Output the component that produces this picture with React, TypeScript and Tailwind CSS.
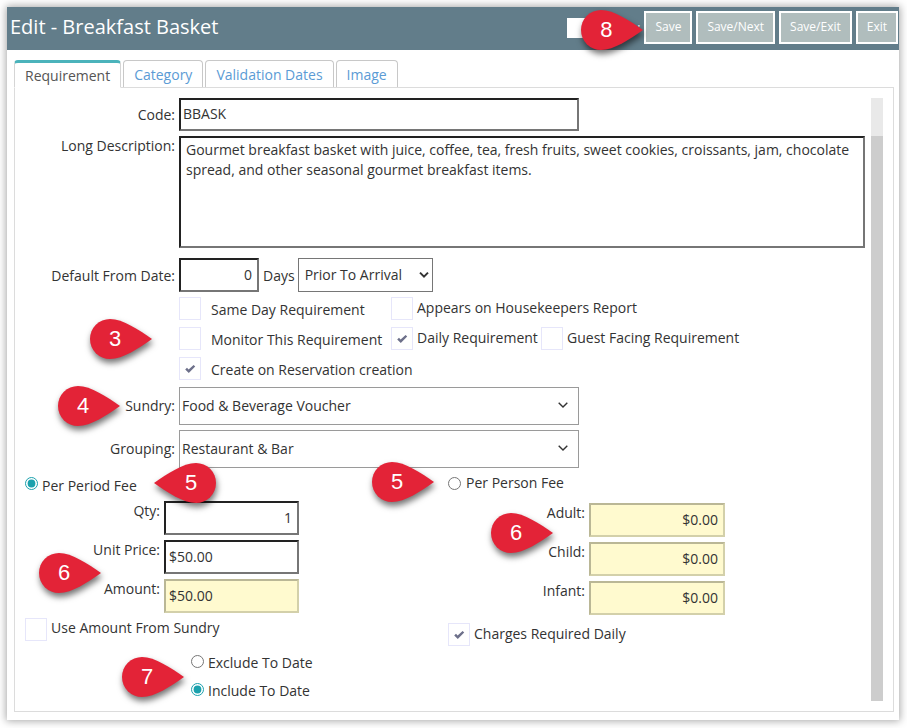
import React, { useState } from 'react';

interface PinProps {
    label: string;
    className: string;
    flip?: boolean;
}

// Red numbered marker, pointing right unless flipped
const Pin: React.FC<PinProps> = ({ label, className, flip }) => (
    <div className={`pointer-events-none absolute z-10 h-10 w-[62px] ${className}`}>
        <svg
            viewBox="0 0 62 40"
            className="h-10 w-[62px] overflow-visible drop-shadow-[1px_4px_3px_rgba(0,0,0,0.55)]"
            aria-hidden="true"
        >
            <path
                d={
                    flip
                        ? 'M0 20 C13 11 29 0 42 0 A20 20 0 0 1 42 40 C29 40 13 29 0 20 Z'
                        : 'M62 20 C49 11 33 0 20 0 A20 20 0 0 0 20 40 C33 40 49 29 62 20 Z'
                }
                fill="#e32337"
            />
        </svg>
        <span
            className={`absolute inset-y-0 flex w-[50px] items-center justify-center font-['Liberation_Sans',sans-serif] text-[22px] text-white ${flip ? 'right-0' : 'left-0'}`}
        >
            {label}
        </span>
    </div>
);

interface CheckProps {
    label: string;
    checked?: boolean;
    className?: string;
    textClassName?: string;
}

const Check: React.FC<CheckProps> = ({ label, checked, className = 'gap-1', textClassName = 'pt-px' }) => (
    <label className={`flex items-start ${className}`}>
        <span className="grid shrink-0 place-items-center">
            <input
                type="checkbox"
                defaultChecked={checked}
                className="peer col-start-1 row-start-1 h-[23px] w-[22px] appearance-none border border-[#e6e6fa] bg-white"
            />
            <svg
                viewBox="0 0 12 10"
                className="pointer-events-none invisible col-start-1 row-start-1 h-2.5 w-3 peer-checked:visible"
                aria-hidden="true"
            >
                <path d="M1.2 5.4 L3 3.8 L4.6 5.6 L9.6 1 L11.2 2.4 L4.8 9 Z" fill="#6d708a" />
            </svg>
        </span>
        <span className={textClassName}>{label}</span>
    </label>
);

interface FieldProps {
    id: string;
    label: string;
    value: string;
    readOnly?: boolean;
    right?: boolean;
    widthClassName?: string;
}

const FeeField: React.FC<FieldProps> = ({ id, label, value, readOnly, right, widthClassName = 'w-[135px]' }) => (
    <div className="flex items-start gap-1">
        <label htmlFor={id} className="w-[135px] text-right">{label}:</label>
        <input
            id={id}
            defaultValue={value}
            readOnly={readOnly}
            className={`h-[34px] border-2 pb-0.5 ${widthClassName} ${right ? 'pr-[5px] text-right' : 'pl-[3px]'} ${
                readOnly
                    ? 'border-t-[#bab796] border-r-[#d3d0aa] border-b-[#d3d0aa] border-l-[#bab796] bg-[#fffacf]'
                    : 'border-t-[#222] border-r-[#767676] border-b-[#767676] border-l-[#222]'
            }`}
        />
    </div>
);

const SundrySelect: React.FC<{ id: string; label: string; options: string[]; children?: React.ReactNode }> = ({
    id,
    label,
    options,
    children,
}) => (
    <div className="relative flex items-center gap-1">
        {children}
        <label htmlFor={id} className="w-[150px] text-right">{label}:</label>
        <div className="grid w-[400px] items-center">
            <select id={id} className="col-start-1 row-start-1 h-[38px] appearance-none border border-[#9a9a9a] bg-white pl-0.5">
                {options.map((option) => <option key={option}>{option}</option>)}
            </select>
            <svg
                viewBox="0 0 10 6"
                className="pointer-events-none col-start-1 row-start-1 mr-[11px] mb-0.5 h-1.5 w-2.5 justify-self-end"
                aria-hidden="true"
            >
                <path d="M0.7 0.7 L5 5 L9.3 0.7" fill="none" stroke="#333" strokeWidth="1.4" />
            </svg>
        </div>
    </div>
);

const tabs = ['Requirement', 'Category', 'Validation Dates', 'Image'];
const actions = ['Save', 'Save/Next', 'Save/Exit', 'Exit'];

const App: React.FC = () => {
    const [activeTab, setActiveTab] = useState('Requirement');

    return (
        <div className="bg-white pt-[7px] pr-2 pb-2 pl-[7px] font-['Open_Sans',sans-serif] text-sm leading-5 text-[#333]">
            <main className="bg-white pb-2 shadow-[0_0_8px_1px_rgba(0,0,0,0.35)]">
                <header className="flex h-[43px] items-center justify-between bg-[#627d8a] pr-px pl-[3px] text-white">
                    <h1 className="pb-1 text-xl">Edit - Breakfast Basket</h1>
                    <div className="flex items-center gap-1 pb-0.5">
                        <div className="relative flex w-[73px] items-center justify-between">
                            <input
                                id="inactive"
                                type="checkbox"
                                aria-label="Inactive"
                                className="h-5 w-5 appearance-none bg-white"
                            />
                            <label htmlFor="inactive" className="text-xs">:</label>
                            <Pin label="8" className="-top-2 -right-[3px]" />
                        </div>
                        {actions.map((action) => (
                            <button
                                key={action}
                                type="button"
                                className="h-[33px] border-2 border-white bg-[#b0bdbd] px-[9px] pb-0.5 text-xs"
                            >
                                {action}
                            </button>
                        ))}
                    </div>
                </header>

                <div className="mt-2.5 mr-[5px] ml-[7px]">
                    <div role="tablist" className="flex items-end gap-0.5">
                        {tabs.map((tab) => (
                            <button
                                key={tab}
                                type="button"
                                role="tab"
                                aria-selected={tab === activeTab}
                                onClick={() => setActiveTab(tab)}
                                className={
                                    tab === activeTab
                                        ? 'relative -mb-px h-7 rounded-t border border-t-[3px] border-[#d5d5d5] border-t-[#4bb3bb] border-b-white bg-white px-2.5 pt-0.5 text-[#555]'
                                        : 'h-[27px] rounded-t border border-b-0 border-[#c8c8c8] px-2.5 pt-px text-[#5b9bd5]'
                                }
                            >
                                {tab}
                            </button>
                        ))}
                    </div>

                    <div className="flex justify-between gap-1.5 border border-[#dcdcdc] p-2.5">
                        <form className="min-w-0 flex-1">
                            <div className="flex items-center gap-1">
                                <label htmlFor="code" className="w-[150px] text-right">Code:</label>
                                <input
                                    id="code"
                                    defaultValue="BBASK"
                                    className="h-[33px] w-[400px] border-2 border-t-[#222] border-r-[#767676] border-b-[#767676] border-l-[#222] pb-0.5 pl-0.5"
                                />
                            </div>

                            <div className="mt-[5px] flex items-start gap-1">
                                <label htmlFor="description" className="w-[150px] shrink-0 text-right">Long Description:</label>
                                <textarea
                                    id="description"
                                    className="h-28 min-w-0 flex-1 resize-none border-2 border-t-[#222] border-r-[#767676] border-b-[#767676] border-l-[#222] px-[5px] py-0.5"
                                    defaultValue="Gourmet breakfast basket with juice, coffee, tea, fresh fruits, sweet cookies, croissants, jam, chocolate spread, and other seasonal gourmet breakfast items."
                                />
                            </div>

                            <div className="mt-2.5 flex items-center gap-1">
                                <label htmlFor="days" className="w-[150px] pt-0.5 text-right">Default From Date:</label>
                                <input
                                    id="days"
                                    defaultValue="0"
                                    className="h-[34px] w-20 border-2 border-t-[#222] border-r-[#767676] border-b-[#767676] border-l-[#222] pr-[5px] pb-0.5 text-right"
                                />
                                <div className="flex items-center gap-[3px]">
                                    <label htmlFor="prior" className="pt-0.5">Days</label>
                                    <div className="grid w-[135px] items-center">
                                        <select
                                            id="prior"
                                            className="col-start-1 row-start-1 h-[34px] appearance-none border border-[#767676] bg-white pl-1.5"
                                        >
                                            <option>Prior To Arrival</option>
                                            <option>After Arrival</option>
                                        </select>
                                        <svg
                                            viewBox="0 0 10 8"
                                            className="pointer-events-none col-start-1 row-start-1 mr-1 h-2 w-2.5 justify-self-end"
                                            aria-hidden="true"
                                        >
                                            <path d="M1 1.6 L5 5.6 L9 1.6" fill="none" stroke="#333" strokeWidth="2" />
                                        </svg>
                                    </div>
                                </div>
                            </div>

                            <div className="relative mt-[5px] flex flex-col gap-[7px] pl-[154px]">
                                <Pin label="3" className="top-[22px] left-[65px]" />
                                <div className="flex">
                                    <Check label="Same Day Requirement" className="w-[212px] gap-2.5" textClassName="pt-[3px]" />
                                    <Check label="Appears on Housekeepers Report" />
                                </div>
                                <div className="flex">
                                    <Check label="Monitor This Requirement" className="w-[212px] gap-2.5" textClassName="pt-[3px]" />
                                    <Check label="Daily Requirement" checked className="w-[150px] gap-1" />
                                    <Check label="Guest Facing Requirement" />
                                </div>
                                <Check label="Create on Reservation creation" checked className="gap-2.5" textClassName="pt-[3px]" />
                            </div>

                            <div className="mt-[7px] flex flex-col gap-[5px]">
                                <SundrySelect
                                    id="sundry"
                                    label="Sundry"
                                    options={['Food & Beverage Voucher']}
                                >
                                    <Pin label="4" className="-top-px left-[33px]" />
                                </SundrySelect>
                                <SundrySelect
                                    id="grouping"
                                    label="Grouping"
                                    options={['Restaurant & Bar']}
                                />
                            </div>

                            <div className="grid grid-cols-[423px_1fr] pt-[5px]">
                                <div className="relative">
                                    <Pin label="5" flip className="-top-2.5 left-[129px]" />
                                    <Pin label="6" className="top-20 left-3.5" />
                                    <label className="flex items-start gap-1">
                                        <input type="radio" name="fee" defaultChecked className="mt-1 size-[13px] accent-[#1ba1ad]" />
                                        <span className="pt-[3px]">Per Period Fee</span>
                                    </label>
                                    <div className="mt-[5px] flex flex-col gap-[5px]">
                                        <FeeField id="qty" label="Qty" value="1" right />
                                        <FeeField id="unit" label="Unit Price" value="$50.00" />
                                        <FeeField id="amount" label="Amount" value="$50.00" readOnly />
                                    </div>
                                    <div className="mt-[5px]">
                                        <Check label="Use Amount From Sundry" textClassName="" />
                                    </div>
                                    <div className="relative mt-3 flex flex-col gap-2 pl-[166px]">
                                        <Pin label="7" className="top-1 left-[97px]" />
                                        <label className="flex items-start gap-1">
                                            <input type="radio" name="to-date" className="mt-0.5 size-[13px] accent-[#1ba1ad]" />
                                            <span>Exclude To Date</span>
                                        </label>
                                        <label className="flex items-start gap-1">
                                            <input type="radio" name="to-date" defaultChecked className="mt-0.5 size-[13px] accent-[#1ba1ad]" />
                                            <span>Include To Date</span>
                                        </label>
                                    </div>
                                </div>

                                <div className="relative">
                                    <Pin label="5" className="-top-[11px] -left-[76px]" />
                                    <Pin label="6" className="top-10 left-[43px]" />
                                    <label className="flex items-start gap-[5px]">
                                        <input type="radio" name="fee" className="mt-1 size-[13px] accent-[#1ba1ad]" />
                                        <span>Per Person Fee</span>
                                    </label>
                                    <div className="mt-2.5 flex flex-col gap-[5px] pl-0.5">
                                        <FeeField id="adult" label="Adult" value="$0.00" readOnly right widthClassName="w-[136px]" />
                                        <FeeField id="child" label="Child" value="$0.00" readOnly right widthClassName="w-[136px]" />
                                        <FeeField id="infant" label="Infant" value="$0.00" readOnly right widthClassName="w-[136px]" />
                                    </div>
                                    <div className="mt-2">
                                        <Check label="Charges Required Daily" checked />
                                    </div>
                                </div>
                            </div>
                        </form>

                        <div className="w-3 shrink-0 bg-[#e9e9e9] pt-[38px]">
                            <div className="h-full bg-[#cdcdcd]" />
                        </div>
                    </div>
                </div>
            </main>
        </div>
    );
};

export default App;
